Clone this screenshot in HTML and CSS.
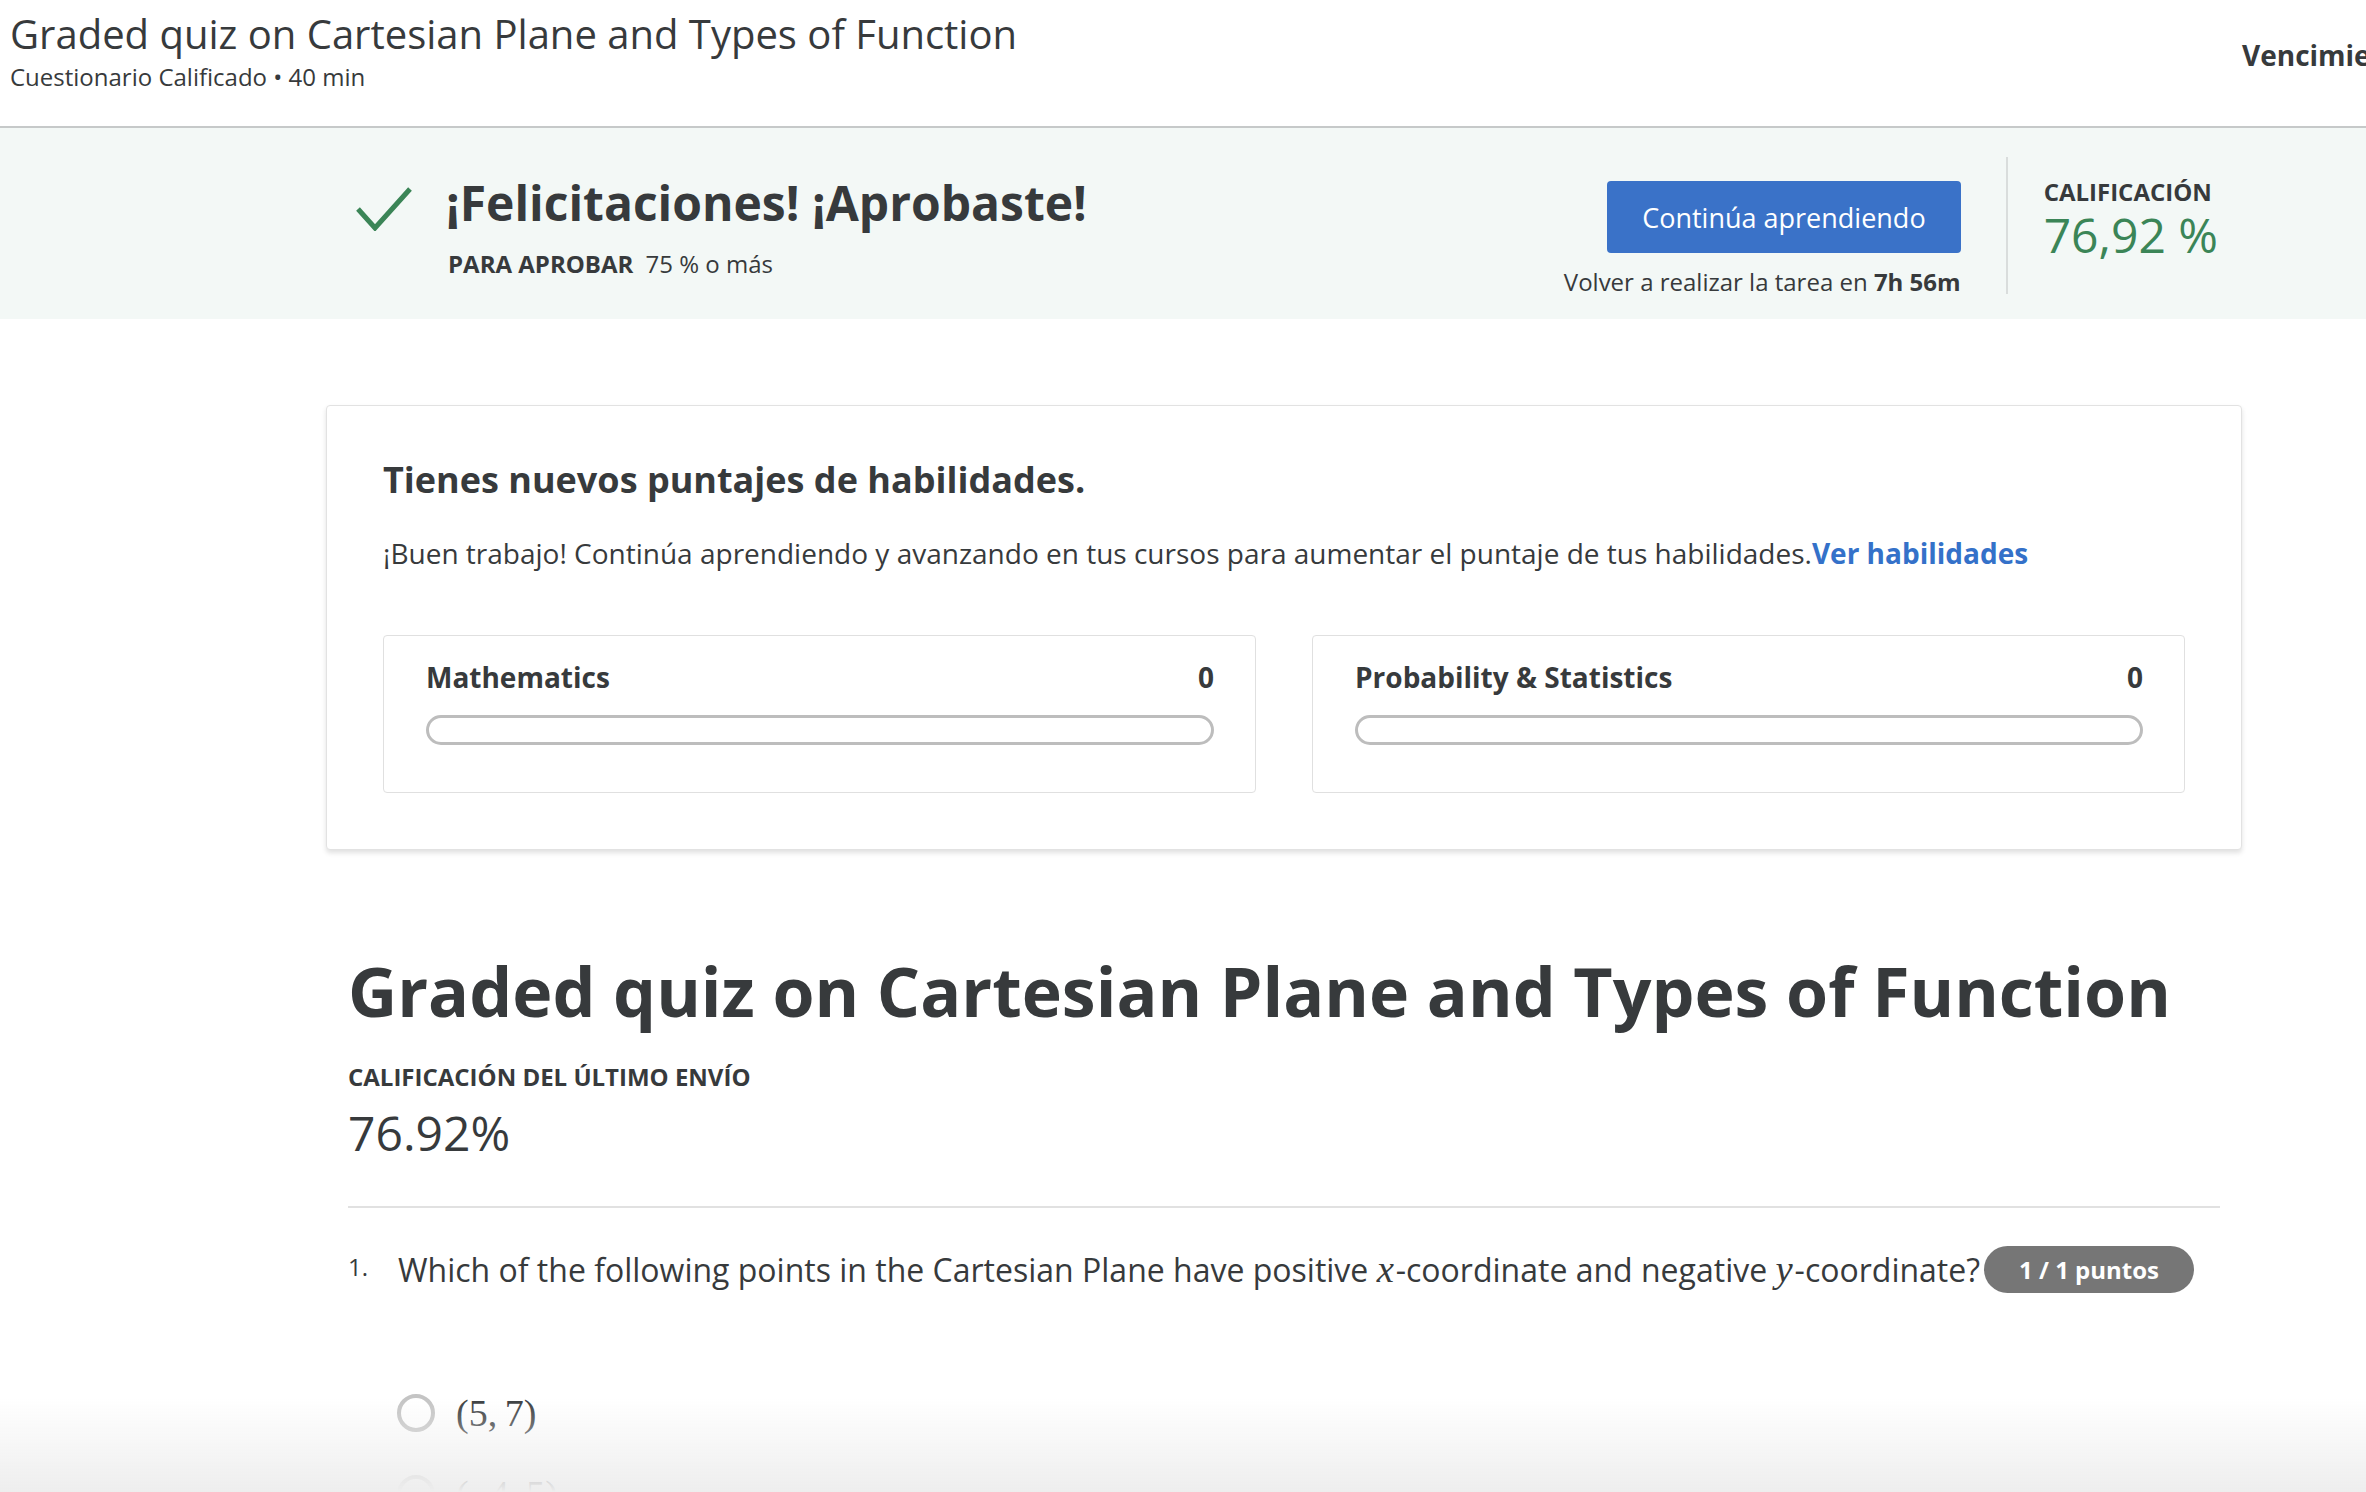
FILE: index.html
```html
<!DOCTYPE html>
<html lang="es">
<head>
<meta charset="utf-8">
<title>Graded quiz on Cartesian Plane and Types of Function</title>
<link rel="stylesheet" href="styles.css">
</head>
<body>
<header class="topbar">
  <div class="topbar-titles">
    <h1 class="topbar-title">Graded quiz on Cartesian Plane and Types of Function</h1>
    <div class="topbar-sub">Cuestionario Calificado • 40 min</div>
  </div>
  <div class="topbar-due">Vencimiento 25 de abr. 23:59 PDT</div>
</header>

<section class="result-banner">
  <div class="banner-inner">
    <div class="banner-pass">
      <svg class="pass-check" width="56" height="44" viewBox="0 0 56 44" aria-hidden="true">
        <polyline points="2,22 19,41 54,2" fill="none" stroke="#3b8557" stroke-width="5"/>
      </svg>
      <div class="pass-text">
        <h2 class="pass-title">¡Felicitaciones! ¡Aprobaste!</h2>
        <p class="pass-req"><span class="pass-req-label">PARA APROBAR</span> 75 % o más</p>
      </div>
    </div>
    <div class="banner-actions">
      <button class="btn-primary" type="button">Continúa aprendiendo</button>
      <p class="retake">Volver a realizar la tarea en <strong>7h 56m</strong></p>
    </div>
    <div class="banner-grade">
      <div class="grade-label">CALIFICACIÓN</div>
      <div class="grade-value">76,92 %</div>
    </div>
  </div>
</section>

<main class="content">
  <section class="skills-card">
    <h2 class="skills-title">Tienes nuevos puntajes de habilidades.</h2>
    <p class="skills-text">¡Buen trabajo! Continúa aprendiendo y avanzando en tus cursos para aumentar el puntaje de tus habilidades.<a class="skills-link" href="#">Ver habilidades</a></p>
    <div class="skills-grid">
      <div class="skill-box">
        <div class="skill-head"><span>Mathematics</span><span>0</span></div>
        <div class="skill-bar"></div>
      </div>
      <div class="skill-box">
        <div class="skill-head"><span>Probability &amp; Statistics</span><span>0</span></div>
        <div class="skill-bar"></div>
      </div>
    </div>
  </section>

  <h1 class="quiz-title">Graded quiz on Cartesian Plane and Types of Function</h1>
  <div class="last-label">CALIFICACIÓN DEL ÚLTIMO ENVÍO</div>
  <div class="last-value">76.92%</div>
  <div class="divider"></div>

  <div class="question">
    <span class="q-num">1.</span>
    <span class="q-text">Which of the following points in the Cartesian Plane have positive <span class="math">x</span>-coordinate and negative <span class="math">y</span>-coordinate?</span>
    <span class="q-badge">1 / 1 puntos</span>
  </div>

  <div class="options">
    <div class="option"><span class="radio"></span><span class="opt-math">(5,<span class="mpunct"></span>7)</span></div>
    <div class="option"><span class="radio"></span><span class="opt-math">(−4,<span class="mpunct"></span>5)</span></div>
    <div class="option"><span class="radio"></span><span class="opt-math">(3,<span class="mpunct"></span>−2)</span></div>
  </div>
</main>
<div class="bottom-fade"></div>
</body>
</html>
```
FILE: styles.css
```css
html, body {
  margin: 0;
  padding: 0;
  overflow: hidden;
  background: #ffffff;
}
body {
  font-family: "Open Sans", "Liberation Sans", sans-serif;
  color: #373a3c;
}

/* top bar */
.topbar {
  display: flex;
  align-items: flex-start;
  padding: 10px 0 31px 10px;
  border-bottom: 2px solid #c6c9c9;
  background: #fff;
}
.topbar-titles {
  flex: 1;
}
.topbar-title {
  margin: 0;
  font-size: 40px;
  font-weight: 400;
  line-height: 48px;
}
.topbar-sub {
  margin-top: 1px;
  font-size: 24px;
  line-height: 36px;
}
.topbar-due {
  flex: 0 0 124px;
  width: 124px;
  margin-top: 24px;
  white-space: nowrap;
  font-size: 28px;
  font-weight: 700;
  line-height: 42px;
}

/* banner */
.result-banner {
  background: #f3f8f6;
  padding: 29px 0 25px;
}
.banner-inner {
  display: flex;
  align-items: stretch;
  margin-left: 348px;
  width: 1872px;
  height: 137px;
}
.banner-pass {
  display: flex;
  align-items: flex-start;
}
.pass-check {
  margin: 30px 0 0 8px;
  flex: none;
}
.pass-text {
  margin: 17px 0 0 34px;
}
.pass-title {
  margin: 0;
  font-size: 48px;
  font-weight: 700;
  line-height: 58px;
}
.pass-req {
  margin: 14px 0 0 2px;
  font-size: 24px;
  line-height: 36px;
}
.pass-req-label {
  font-weight: 700;
  margin-right: 6px;
}
.banner-actions {
  margin: 24px 45px 0 auto;
  display: flex;
  flex-direction: column;
  align-items: flex-end;
}
.btn-primary {
  height: 72px;
  padding: 0 35px;
  border: none;
  border-radius: 4px;
  background: #3a72c8;
  color: #fff;
  font-family: "Open Sans", "Liberation Sans", sans-serif;
  font-size: 27px;
  cursor: pointer;
}
.retake {
  margin: 17px 0 0;
  font-size: 24px;
  line-height: 24px;
}
.banner-grade {
  border-left: 2px solid #d9dddc;
  padding: 19px 2px 0 36px;
}
.grade-label {
  font-size: 24px;
  font-weight: 700;
  line-height: 32px;
}
.grade-value {
  font-size: 48px;
  line-height: 54px;
  color: #3b8557;
}

/* main content */
.content {
  margin-left: 348px;
  width: 1872px;
}
.skills-card {
  margin: 86px -22px 0;
  padding: 51px 56px 56px;
  border: 1px solid #e2e2e2;
  border-radius: 4px;
  box-shadow: 0 3px 5px rgba(0, 0, 0, 0.12);
  background: #fff;
}
.skills-title {
  margin: 0;
  font-size: 36px;
  font-weight: 700;
  line-height: 45px;
}
.skills-text {
  margin: 30px 0 0;
  font-size: 28px;
  line-height: 42px;
}
.skills-link {
  color: #3471c9;
  font-weight: 700;
  text-decoration: none;
}
.skills-grid {
  margin-top: 61px;
  display: grid;
  grid-template-columns: 1fr 1fr;
  gap: 56px;
}
.skill-box {
  border: 1px solid #e0e0e0;
  border-radius: 4px;
  padding: 20px 41px 47px 42px;
}
.skill-head {
  display: flex;
  justify-content: space-between;
  font-size: 28px;
  font-weight: 700;
  line-height: 42px;
}
.skill-bar {
  margin-top: 17px;
  height: 30px;
  box-sizing: border-box;
  border: 3px solid #bdbdbd;
  border-radius: 15px;
  background: #fff;
}

.quiz-title {
  margin: 99px 0 0;
  font-size: 68px;
  font-weight: 700;
  line-height: 84px;
}
.last-label {
  margin-top: 26px;
  font-size: 24px;
  font-weight: 700;
  line-height: 36px;
}
.last-value {
  margin-top: 8px;
  font-size: 48px;
  line-height: 60px;
}
.divider {
  margin-top: 43px;
  height: 2px;
  background: #e1e1e1;
}

.question {
  margin-top: 38px;
  display: flex;
  align-items: center;
}
.q-num {
  flex: 0 0 50px;
  font-size: 24px;
  line-height: 36px;
  margin-top: -6px;
}
.q-text {
  white-space: nowrap;
  font-size: 32px;
  line-height: 44px;
}
.math {
  font-family: "Liberation Serif", "DejaVu Serif", serif;
  font-style: italic;
  font-size: 1.21em;
  line-height: 1;
  margin-right: 0.05em;
}
.q-badge {
  margin-left: 4px;
  height: 47px;
  padding: 0 35px;
  display: flex;
  align-items: center;
  border-radius: 24px;
  background: #767676;
  color: #fff;
  font-size: 24px;
  font-weight: 700;
  white-space: nowrap;
}

.options {
  margin-top: 96px;
  padding-left: 49px;
  display: flex;
  flex-direction: column;
  gap: 33px;
}
.option {
  display: flex;
  align-items: center;
  height: 48px;
}
.radio {
  width: 38px;
  height: 38px;
  box-sizing: border-box;
  border: 4px solid #c4c4c4;
  border-radius: 50%;
  flex: none;
}
.opt-math {
  margin-left: 21px;
  font-family: "Liberation Serif", "DejaVu Serif", serif;
  font-size: 38px;
  line-height: 48px;
}
.mpunct {
  display: inline-block;
  width: 0.2em;
}

.bottom-fade {
  position: fixed;
  left: 0;
  right: 0;
  bottom: 0;
  height: 95px;
  background: linear-gradient(to bottom, rgba(239, 239, 239, 0), #eeeeee);
  pointer-events: none;
}
```
